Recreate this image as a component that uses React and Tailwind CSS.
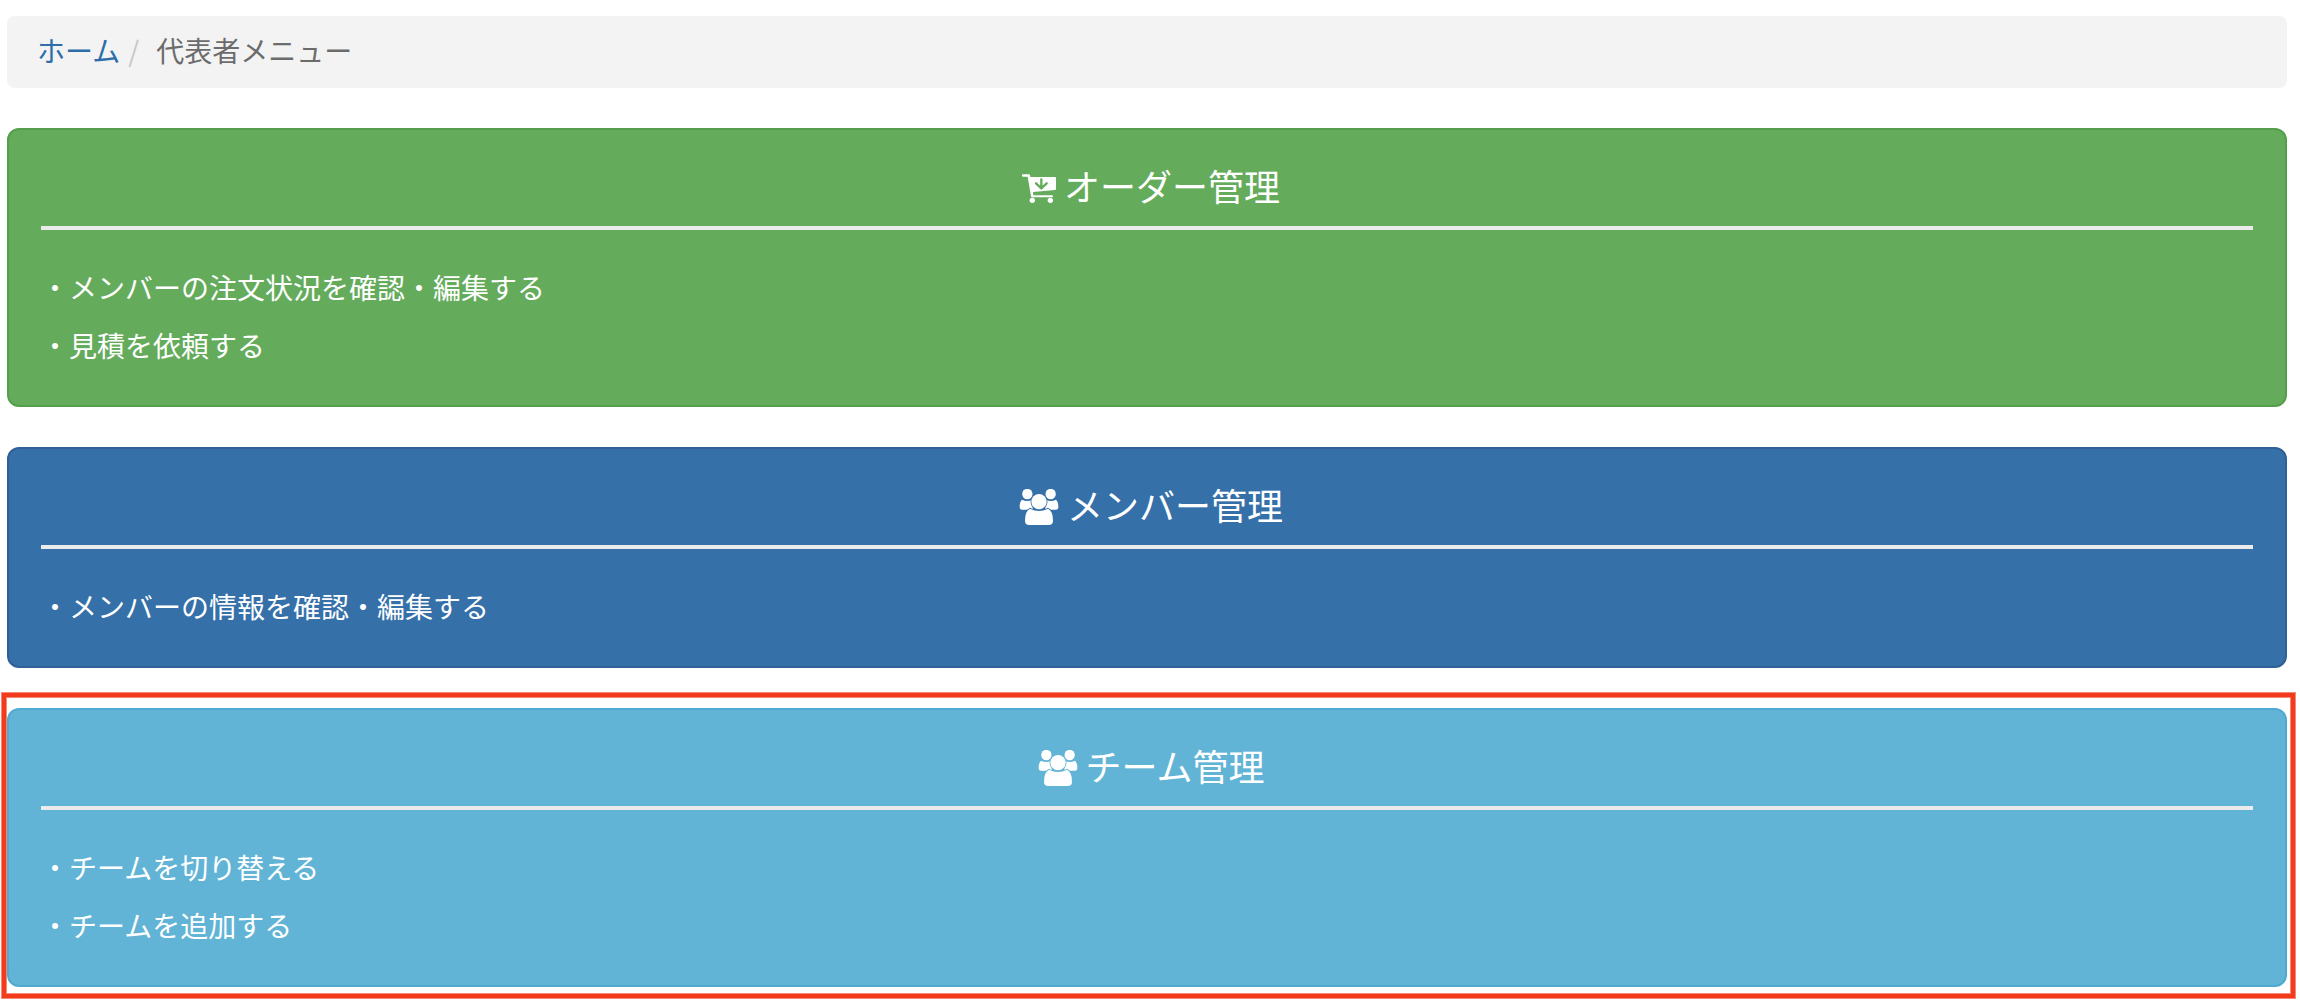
import React from 'react';

const CartIcon = ({ cutout }) => (
  <svg viewBox="0 0 102 87" className="mt-1.5 w-[34px] h-[29px]" fill="currentColor" aria-hidden="true">
    <path d="M1 1h20q2 0 3 3l1 5h74q3 0 3 3v33q0 3-3 3l-66 6 1 10h56q3 0 3 3t-3 3H30q-3 0-3-3L17 8H3Q0 8 0 5t1-4z" />
    <circle cx="31" cy="79" r="8" />
    <circle cx="85" cy="79" r="8" />
    <path
      d="M58 16v26M42 28l16 15 16-15"
      className={cutout}
      fill="none"
      strokeWidth="7"
      strokeLinecap="round"
      strokeLinejoin="round"
    />
  </svg>
);

const PeopleIcon = ({ cutout }) => (
  <svg viewBox="0 0 118 108" className="mt-1.5 w-10 h-9" fill="currentColor" aria-hidden="true">
    <circle cx="24" cy="15" r="15.5" />
    <circle cx="94" cy="15" r="15.5" />
    <path d="M8 32q15 8 32 0v30H8q-7 0-7-8 0-16 7-22z" />
    <path d="M110 32q-15 8-32 0v30h32q7 0 7-8 0-16-7-22z" />
    <g className={cutout} strokeWidth="5" paintOrder="stroke">
      <path d="M32 59q27 14 54 0 15 7 15 36 0 13-13 13H30q-13 0-13-13 0-29 15-36z" />
      <circle cx="59" cy="38" r="23" />
    </g>
  </svg>
);

const menus = [
  {
    title: 'オーダー管理',
    href: '#orders',
    Icon: CartIcon,
    card: 'bg-[#64ab5c] border-[#559f4c]',
    cutout: 'stroke-[#64ab5c]',
    items: ['メンバーの注文状況を確認・編集する', '見積を依頼する'],
  },
  {
    title: 'メンバー管理',
    href: '#members',
    Icon: PeopleIcon,
    card: 'bg-[#3570a9] border-[#2f6096]',
    cutout: 'stroke-[#3570a9]',
    items: ['メンバーの情報を確認・編集する'],
  },
  {
    title: 'チーム管理',
    href: '#teams',
    Icon: PeopleIcon,
    card: 'bg-[#62b4d6] border-[#4faad2]',
    cutout: 'stroke-[#62b4d6]',
    items: ['チームを切り替える', 'チームを追加する'],
    highlighted: true,
  },
];

const MenuCard = ({ title, href, Icon, card, cutout, items, highlighted }) => (
  <div className="relative">
    <a href={href} className={`block rounded-xl border-2 px-8 pt-[30px] pb-[31px] text-white ${card}`}>
      <h2 className="flex items-center justify-center gap-2 border-b-4 border-[#ebebeb] pb-4 pl-2 text-[36px] leading-[50px]">
        <Icon cutout={cutout} />
        <span>{title}</span>
      </h2>
      <ul className="pt-7 text-[28px] leading-[58px]">
        {items.map((item) => (
          <li key={item}>・{item}</li>
        ))}
      </ul>
    </a>
    {highlighted && (
      <div className="pointer-events-none absolute -top-[15px] -bottom-[11px] -left-[5px] -right-2 border-4 border-[#f23b1c] ring-1 ring-[#f23b1c]/60 inset-ring-1 inset-ring-[#f23b1c]/60" />
    )}
  </div>
);

const App = () => {
  return (
    <div
      lang="ja"
      className="bg-white pt-4 pb-5 pl-[7px] pr-[13px] font-['Noto_Sans_CJK_JP',sans-serif]"
    >
      <nav aria-label="パンくずリスト" className="mb-10 rounded-lg bg-[#f3f3f3] px-[30px] pt-3.5 pb-4.5">
        <ol className="flex items-center text-[28px] leading-10">
          <li>
            <a href="#home" className="text-[#2e6da9]">ホーム</a>
          </li>
          <li aria-hidden="true" className="w-9 pl-2 text-[#c8c8c8]">/</li>
          <li aria-current="page" className="text-[#6c6c6c]">代表者メニュー</li>
        </ol>
      </nav>

      <main className="flex flex-col gap-10">
        {menus.map((menu) => (
          <MenuCard key={menu.title} {...menu} />
        ))}
      </main>
    </div>
  );
};

export default App;
